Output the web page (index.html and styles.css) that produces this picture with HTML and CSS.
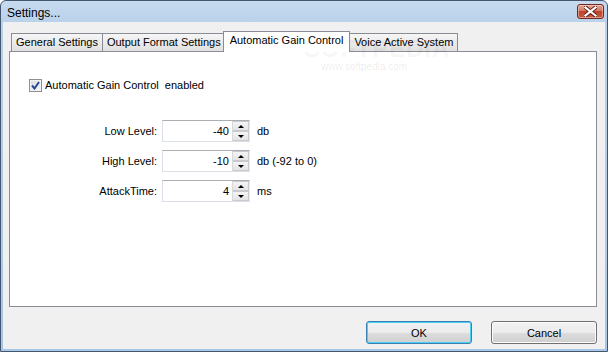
FILE: index.html
```html
<!DOCTYPE html>
<html lang="en">
  <head>
    <title>Settings...</title>
    <link rel="stylesheet" href="styles.css">
  </head>
  <body>
    <div class="window">
      <div class="titlebar">
        <span class="title">Settings...</span>
        <button class="close">
          <svg width="13" height="11" viewBox="0 0 13 11">
            <path d="M1.5 1.5 L11.5 9.5 M11.5 1.5 L1.5 9.5" stroke="#5a1b14" stroke-width="4" stroke-linecap="square"/>
            <path d="M1.5 1.5 L11.5 9.5 M11.5 1.5 L1.5 9.5" stroke="#ffffff" stroke-width="2.2" stroke-linecap="square"/>
          </svg>
        </button>
      </div>

      <div class="client">
        <div class="tabs">
          <div class="tab">General Settings</div>
          <div class="tab">Output Format Settings</div>
          <div class="tab active">Automatic Gain Control</div>
          <div class="tab">Voice Active System</div>
        </div>

        <div class="panel">
          <label class="check">
            <span class="box">
              <svg width="9" height="9" viewBox="0 0 9 9"><path d="M1 4.5 L3.5 7.5 L8 1" fill="none" stroke="#2d4a96" stroke-width="2"/></svg>
            </span>
            Automatic Gain Control&nbsp; enabled
          </label>

          <div class="fields">
            <div class="row">
              <span class="lbl">Low Level:</span>
              <div class="spin"><span class="val">-40</span><div class="arrows"><span class="up"></span><span class="down"></span></div></div>
              <span class="unit">db</span>
            </div>
            <div class="row">
              <span class="lbl">High Level:</span>
              <div class="spin"><span class="val">-10</span><div class="arrows"><span class="up"></span><span class="down"></span></div></div>
              <span class="unit">db (-92 to 0)</span>
            </div>
            <div class="row">
              <span class="lbl">AttackTime:</span>
              <div class="spin"><span class="val">4</span><div class="arrows"><span class="up"></span><span class="down"></span></div></div>
              <span class="unit">ms</span>
            </div>
          </div>
        </div>

        <div class="buttons">
          <button class="btn default">OK</button>
          <button class="btn">Cancel</button>
        </div>
      </div>

      <div class="watermark">SOFTPEDIA<sup>™</sup></div>
      <div class="watermark-url">www.softpedia.com</div>
    </div>
  </body>
</html>
```

FILE: styles.css
```css
body {
  margin: 0;
  background: #ffffff;
  font-family: "Liberation Sans", Arial, sans-serif;
  font-size: 11px;
  color: #000;
}

.window {
  position: relative;
  width: 608px;
  height: 352px;
  box-sizing: border-box;
  border: 1px solid #44576f;
  border-radius: 6px 6px 0 0;
  padding: 0 2px 2px;
  background: linear-gradient(#c7daef, #b9d1ea 22px, #a7c6e8);
  display: flex;
  flex-direction: column;
  overflow: hidden;
}

/* barra de titulo */
.titlebar {
  height: 21px;
  display: flex;
  align-items: flex-start;
  justify-content: space-between;
  padding: 0 1px 0 4px;
}

.title {
  margin-top: 5px;
  font-size: 12px;
  line-height: 14px;
  color: #000;
}

.close {
  margin-top: 3px;
  width: 27px;
  height: 15px;
  padding: 0;
  border: 1px solid #6b2a22;
  border-radius: 3px;
  background: linear-gradient(#e8a493, #d47a66 45%, #c0432d 50%, #c95a3f);
  box-shadow: inset 0 0 0 1px rgba(255, 220, 210, 0.5);
  display: flex;
  align-items: center;
  justify-content: center;
}

/* area cliente */
.client {
  flex: 1;
  background: #f0f0f0;
  padding: 9px 8px 0 6px;
  display: flex;
  flex-direction: column;
}

.tabs {
  height: 20px;
  display: flex;
  align-items: flex-end;
  padding-left: 2px;
}

.tab {
  height: 17px;
  line-height: 16px;
  padding: 0 4px;
  border: 1px solid #898c95;
  border-bottom: none;
  margin-right: -1px;
  background: linear-gradient(#f6f6f6, #ebebeb 50%, #e0e0e0);
  white-space: nowrap;
}

.tab.active {
  position: relative;
  z-index: 1;
  height: 20px;
  line-height: 17px;
  margin: 0 -1px -1px -2px;
  padding: 0 6px 0 6px;
  background: #ffffff;
}

.panel {
  height: 256px;
  box-sizing: border-box;
  border: 1px solid #898c95;
  background: #ffffff;
  padding: 27px 0 0 19px;
}

.check {
  display: flex;
  align-items: center;
  height: 13px;
  line-height: 13px;
}

.box {
  width: 11px;
  height: 11px;
  border: 1px solid #8e8f8f;
  background: linear-gradient(135deg, #dcdee2, #f7f7f8);
  box-shadow: inset 0 0 0 1px #f4f4f4;
  margin-right: 3px;
  display: flex;
  align-items: center;
  justify-content: center;
}

.fields {
  margin-top: 28px;
  display: flex;
  flex-direction: column;
  gap: 8px;
}

.row {
  display: flex;
  align-items: center;
  height: 22px;
}

.lbl {
  width: 128px;
  text-align: right;
  margin-right: 5px;
}

.spin {
  width: 88px;
  height: 22px;
  box-sizing: border-box;
  border: 1px solid #dbdfe6;
  border-top-color: #abadb3;
  border-right-color: #e3e9ef;
  display: flex;
}

.val {
  flex: 1;
  text-align: right;
  padding-right: 3px;
  line-height: 20px;
}

.arrows {
  width: 16px;
  display: flex;
  flex-direction: column;
  border-left: 1px solid #d9d9d9;
}

.arrows span {
  flex: 1;
  border: 1px solid #c9cacf;
  border-left: none;
  background: linear-gradient(#f4f4f4, #e4e4e4);
  display: flex;
  align-items: center;
  justify-content: center;
}

.arrows .up::after {
  content: "";
  border: 3px solid transparent;
  border-bottom: 3px solid #000;
  border-top: none;
}

.arrows .down::after {
  content: "";
  border: 3px solid transparent;
  border-top: 3px solid #000;
  border-bottom: none;
}

.unit {
  margin-left: 7px;
}

.buttons {
  margin-top: 14px;
  display: flex;
  justify-content: flex-end;
  gap: 19px;
}

.btn {
  width: 106px;
  height: 23px;
  padding: 0;
  font-family: "Liberation Sans", Arial, sans-serif;
  font-size: 11px;
  color: #000;
  border: 1px solid #707070;
  border-radius: 3px;
  background: linear-gradient(#f2f2f2, #ebebeb 50%, #dddddd 51%, #cfcfcf);
  box-shadow: inset 0 0 0 1px #fcfcfc;
}

.btn.default {
  border-color: #3c7fb1;
  box-shadow: inset 0 0 0 1px #48cff8;
}

/* marca de agua */
.watermark {
  position: absolute;
  left: 303px;
  top: 32px;
  font-size: 24px;
  line-height: 20px;
  font-weight: bold;
  letter-spacing: 1px;
  color: rgba(0, 0, 0, 0.05);
  pointer-events: none;
}

.watermark sup {
  font-size: 8px;
  vertical-align: 12px;
}

.watermark-url {
  position: absolute;
  left: 320px;
  top: 60px;
  font-size: 10px;
  line-height: 11px;
  color: rgba(0, 0, 0, 0.09);
  pointer-events: none;
}
```
